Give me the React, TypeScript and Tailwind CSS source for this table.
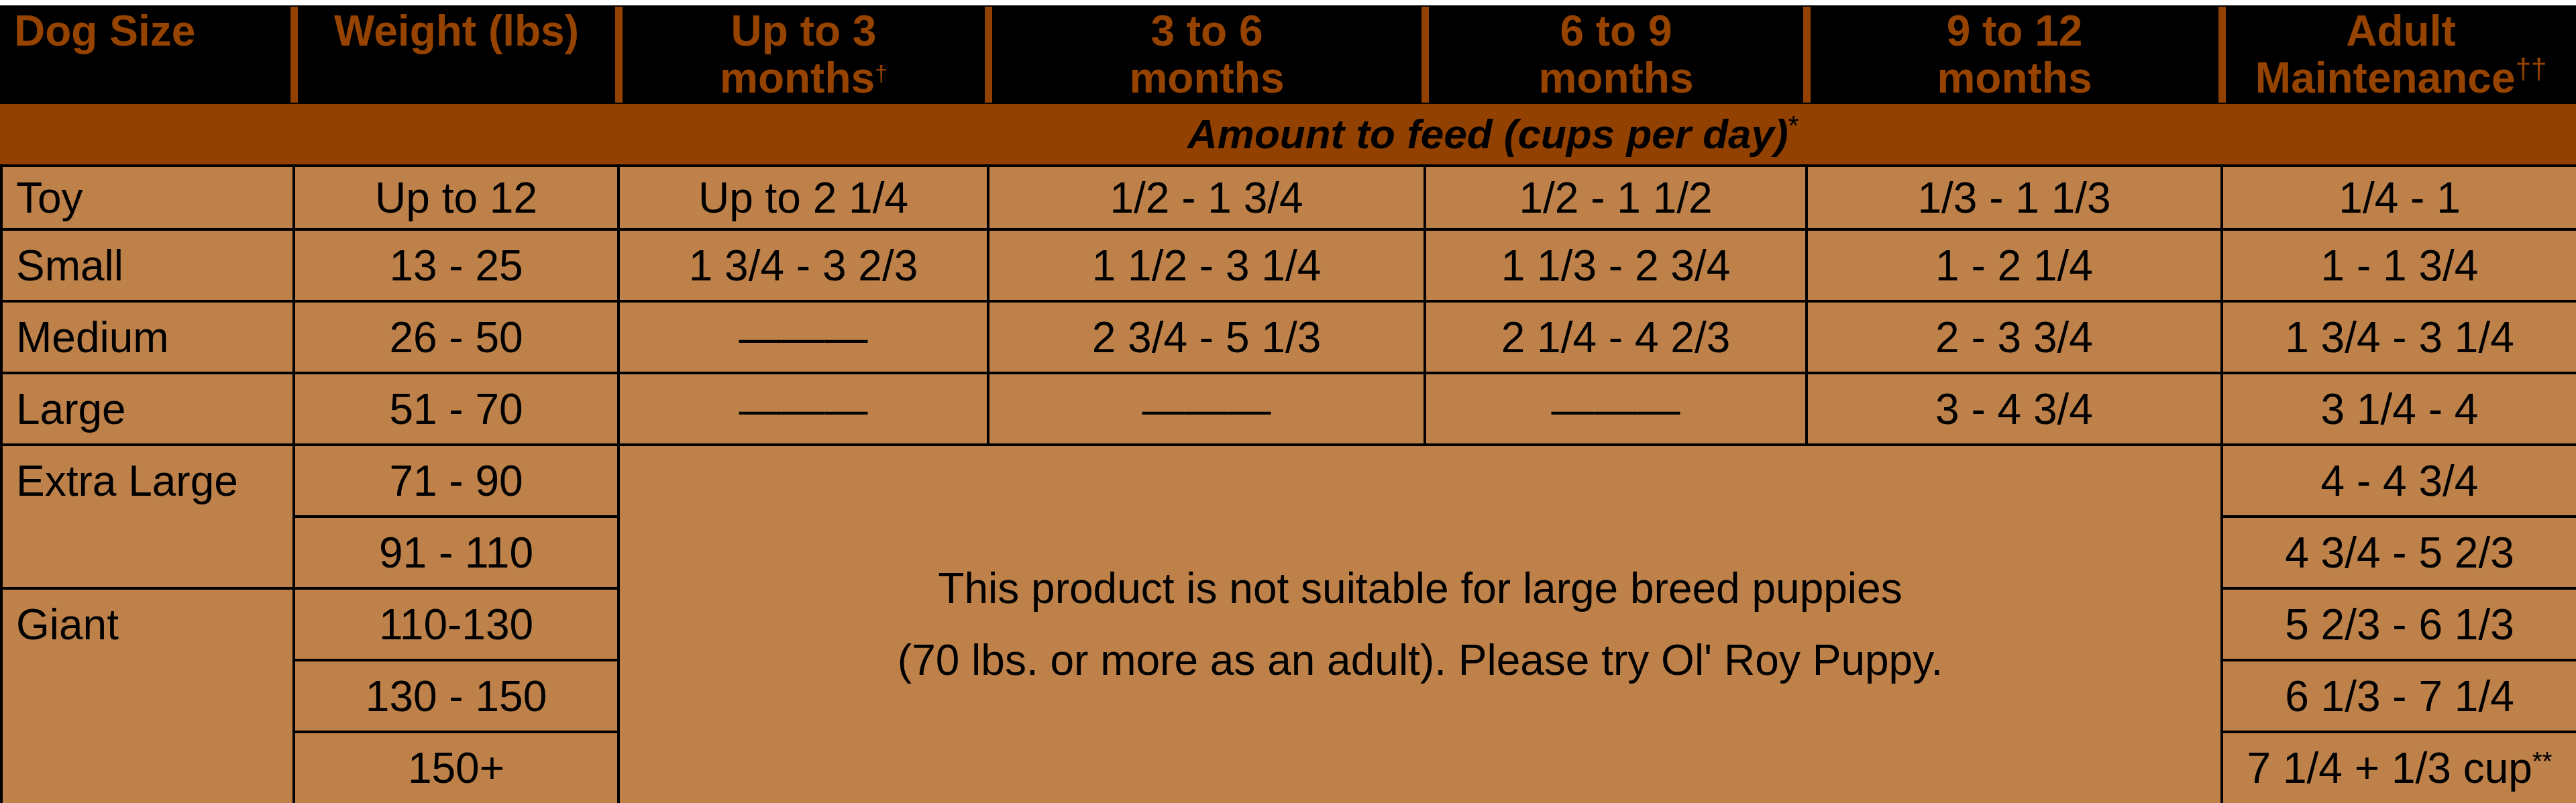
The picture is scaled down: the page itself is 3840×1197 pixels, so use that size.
import { Fragment } from 'react';

const tan = 'bg-[#bd8149]';

type Row = {
  size: string;
  weight: string;
  cells: string[];
  adult: string;
};

const rows: Row[] = [
  { size: 'Toy', weight: 'Up to 12', cells: ['Up to 2 1/4', '1/2 - 1 3/4', '1/2 - 1 1/2', '1/3 - 1 1/3'], adult: '1/4 - 1' },
  { size: 'Small', weight: '13 - 25', cells: ['1 3/4 - 3 2/3', '1 1/2 - 3 1/4', '1 1/3 - 2 3/4', '1 - 2 1/4'], adult: '1 - 1 3/4' },
  { size: 'Medium', weight: '26 - 50', cells: ['———', '2 3/4 - 5 1/3', '2 1/4 - 4 2/3', '2 - 3 3/4'], adult: '1 3/4 - 3 1/4' },
  { size: 'Large', weight: '51 - 70', cells: ['———', '———', '———', '3 - 4 3/4'], adult: '3 1/4 - 4' },
];

function Cell({ children, className = '' }: { children?: React.ReactNode; className?: string }) {
  return (
    <div className={`${tan} flex items-center justify-center text-[64px] leading-none text-black ${className}`}>
      {children}
    </div>
  );
}

function SizeCell({ label, span }: { label: string; span: 'row-span-2' | 'row-span-3' }) {
  return (
    <div className={`${tan} ${span} flex flex-col`}>
      <div className="h-[103px] flex items-center pl-[20px] text-[64px] leading-none">{label}</div>
    </div>
  );
}

function HeadSep() {
  return <div className="w-[11px] shrink-0 bg-[#934100] my-[2px]" />;
}

export default function App() {
  return (
    <div className="w-[3840px] h-[1197px] overflow-hidden bg-white pt-[8px] font-['Liberation_Sans',Arial,sans-serif]">
      {/* Header */}
      <div className="flex h-[147px] bg-black text-[#964300] font-bold text-[64px] leading-[70px]">
        <div className="w-[433px] shrink-0 pl-[21px] pt-[3px]">Dog Size</div>
        <HeadSep />
        <div className="w-[473px] shrink-0 text-center pt-[3px]">Weight (lbs)</div>
        <HeadSep />
        <div className="w-[540px] shrink-0 text-center pt-[3px]">
          Up to 3<br />
          months<sup className="text-[34px] font-normal">†</sup>
        </div>
        <HeadSep />
        <div className="w-[640px] shrink-0 text-center pt-[3px]">
          3 to 6<br />
          months
        </div>
        <HeadSep />
        <div className="w-[558px] shrink-0 text-center pt-[3px]">
          6 to 9<br />
          months
        </div>
        <HeadSep />
        <div className="w-[608px] shrink-0 text-center pt-[3px]">
          9 to 12<br />
          months
        </div>
        <HeadSep />
        <div className="w-[522px] shrink-0 text-center pt-[3px]">
          Adult<br />
          Maintenance<sup className="text-[42px] font-normal">††</sup>
        </div>
      </div>

      {/* Band */}
      <div className="h-[94px] bg-[#924100] border-b-[4px] border-black flex items-center pl-[1770px]">
        <span className="text-[62px] font-bold italic text-black leading-none">
          Amount to feed (cups per day)<sup className="text-[40px] font-normal not-italic">*</sup>
        </span>
      </div>

      {/* Body */}
      <div className="grid bg-black pl-[4px] gap-[4px] grid-cols-[432px_480px_547px_647px_565px_615px_526px] grid-rows-[91px_103px_103px_103px_103px_103px_103px_103px_104px]">
        {rows.map((r) => (
          <Fragment key={r.size}>
            <Cell className="justify-start pl-[20px]">{r.size}</Cell>
            <Cell>{r.weight}</Cell>
            {r.cells.map((c, i) => (
              <Cell key={i} className={c === '———' ? 'text-[60px]' : ''}>
                {c}
              </Cell>
            ))}
            <Cell>{r.adult}</Cell>
          </Fragment>
        ))}

        <SizeCell label="Extra Large" span="row-span-2" />
        <Cell>71 - 90</Cell>
        <div className={`${tan} col-span-4 row-span-5 flex flex-col items-center justify-center text-[64px] leading-[107px] text-center`}>
          <div>This product is not suitable for large breed puppies</div>
          <div>(70 lbs. or more as an adult). Please try Ol' Roy Puppy.</div>
        </div>
        <Cell>4 - 4 3/4</Cell>

        <Cell>91 - 110</Cell>
        <Cell>4 3/4 - 5 2/3</Cell>

        <SizeCell label="Giant" span="row-span-3" />
        <Cell>110-130</Cell>
        <Cell>5 2/3 - 6 1/3</Cell>

        <Cell>130 - 150</Cell>
        <Cell>6 1/3 - 7 1/4</Cell>

        <Cell>150+</Cell>
        <Cell>
          <span>
            7 1/4 + 1/3 cup<sup className="text-[38px]">**</sup>
          </span>
        </Cell>
      </div>
    </div>
  );
}
